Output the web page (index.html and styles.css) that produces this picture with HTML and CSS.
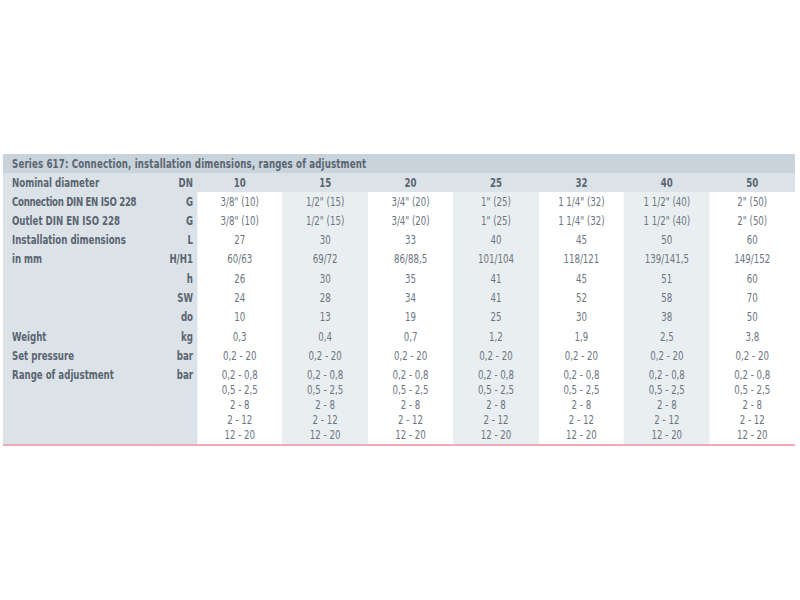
FILE: index.html
```html
<!DOCTYPE html>
<html>
<head>
<meta charset="utf-8">
<link rel="stylesheet" href="styles.css">
</head>
<body>
<div class="wrap">
<table class="spec">
  <colgroup>
    <col class="c-label"><col class="c-unit">
    <col class="c-val"><col class="c-val"><col class="c-val"><col class="c-val"><col class="c-val"><col class="c-val"><col class="c-val">
  </colgroup>
  <thead>
    <tr class="title"><th colspan="9">Series 617: Connection, installation dimensions, ranges of adjustment</th></tr>
    <tr class="head">
      <th class="lab">Nominal diameter</th><th class="unit">DN</th>
      <th>10</th><th>15</th><th>20</th><th>25</th><th>32</th><th>40</th><th>50</th>
    </tr>
  </thead>
  <tbody>
    <tr><th class="lab tight">Connection DIN EN ISO 228</th><th class="unit">G</th>
      <td>3/8" (10)</td><td class="s">1/2" (15)</td><td>3/4" (20)</td><td class="s">1" (25)</td><td>1 1/4" (32)</td><td class="s">1 1/2" (40)</td><td>2" (50)</td></tr>
    <tr><th class="lab">Outlet DIN EN ISO 228</th><th class="unit">G</th>
      <td>3/8" (10)</td><td class="s">1/2" (15)</td><td>3/4" (20)</td><td class="s">1" (25)</td><td>1 1/4" (32)</td><td class="s">1 1/2" (40)</td><td>2" (50)</td></tr>
    <tr><th class="lab">Installation dimensions</th><th class="unit">L</th>
      <td>27</td><td class="s">30</td><td>33</td><td class="s">40</td><td>45</td><td class="s">50</td><td>60</td></tr>
    <tr><th class="lab">in mm</th><th class="unit">H/H1</th>
      <td>60/63</td><td class="s">69/72</td><td>86/88,5</td><td class="s">101/104</td><td>118/121</td><td class="s">139/141,5</td><td>149/152</td></tr>
    <tr><th class="lab"></th><th class="unit">h</th>
      <td>26</td><td class="s">30</td><td>35</td><td class="s">41</td><td>45</td><td class="s">51</td><td>60</td></tr>
    <tr><th class="lab"></th><th class="unit">SW</th>
      <td>24</td><td class="s">28</td><td>34</td><td class="s">41</td><td>52</td><td class="s">58</td><td>70</td></tr>
    <tr><th class="lab"></th><th class="unit">do</th>
      <td>10</td><td class="s">13</td><td>19</td><td class="s">25</td><td>30</td><td class="s">38</td><td>50</td></tr>
    <tr><th class="lab">Weight</th><th class="unit">kg</th>
      <td>0,3</td><td class="s">0,4</td><td>0,7</td><td class="s">1,2</td><td>1,9</td><td class="s">2,5</td><td>3,8</td></tr>
    <tr><th class="lab">Set pressure</th><th class="unit">bar</th>
      <td>0,2 - 20</td><td class="s">0,2 - 20</td><td>0,2 - 20</td><td class="s">0,2 - 20</td><td>0,2 - 20</td><td class="s">0,2 - 20</td><td>0,2 - 20</td></tr>
    <tr class="range"><th class="lab">Range of adjustment</th><th class="unit">bar</th>
      <td>0,2 - 0,8<br>0,5 - 2,5<br>2 - 8<br>2 - 12<br>12 - 20</td>
      <td class="s">0,2 - 0,8<br>0,5 - 2,5<br>2 - 8<br>2 - 12<br>12 - 20</td>
      <td>0,2 - 0,8<br>0,5 - 2,5<br>2 - 8<br>2 - 12<br>12 - 20</td>
      <td class="s">0,2 - 0,8<br>0,5 - 2,5<br>2 - 8<br>2 - 12<br>12 - 20</td>
      <td>0,2 - 0,8<br>0,5 - 2,5<br>2 - 8<br>2 - 12<br>12 - 20</td>
      <td class="s">0,2 - 0,8<br>0,5 - 2,5<br>2 - 8<br>2 - 12<br>12 - 20</td>
      <td>0,2 - 0,8<br>0,5 - 2,5<br>2 - 8<br>2 - 12<br>12 - 20</td></tr>
  </tbody>
</table>
</div>
</body>
</html>
```

FILE: styles.css
```css
html, body {
  margin: 0;
  padding: 0;
  background: #ffffff;
}
.wrap {
  padding: 154px 0 0 3px;
  overflow: hidden;
}
/* the table is laid out wide and condensed horizontally to mimic a narrow typeface */
.spec {
  border-collapse: collapse;
  table-layout: fixed;
  width: 990px;
  transform: scaleX(0.8);
  transform-origin: 0 0;
  font-family: "DejaVu Sans Condensed", "DejaVu Sans", sans-serif;
  font-size: 12px;
  color: #6b757f;
  background: #dbe2e8;
  border-bottom: 2px solid #f3a7b7;
}
.c-label { width: 187.5px; }
.c-unit { width: 55px; }
.c-val { width: 106.79px; }
.spec th, .spec td {
  padding: 2.2px 0;
  line-height: 15px;
  vertical-align: top;
  white-space: nowrap;
}
.spec td {
  text-align: center;
  font-weight: normal;
  background: #ffffff;
}
.spec td.s {
  background: #e9eef1;
}
.spec th {
  font-weight: bold;
  color: #5a6570;
}
.spec th.lab {
  text-align: left;
  padding-left: 11.25px;
}
.spec th.tight {
  letter-spacing: -0.4px;
}
.spec th.unit {
  text-align: right;
  padding-right: 5px;
}
.title th {
  background: #c8d3dc;
  text-align: left;
  padding: 2.5px 0 1.5px 11.25px;
  height: 15px;
  letter-spacing: 0.2px;
}
.head th {
  text-align: center;
  padding: 2.5px 0 1.5px;
}
.spec tbody th, .spec tbody td {
  padding-top: 2.6px;
  padding-bottom: 1.7px;
}
.spec .range td, .spec .range th {
  padding-bottom: 0.4px;
}
```
